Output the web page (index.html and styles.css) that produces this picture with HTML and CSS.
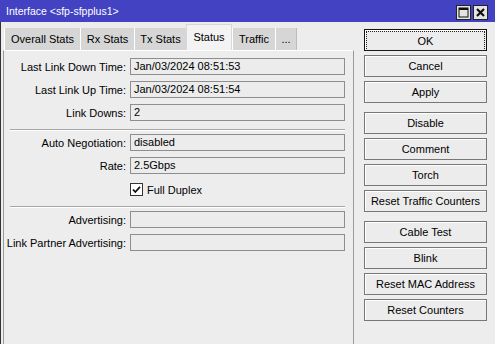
FILE: index.html
```html
<!DOCTYPE html>
<html lang="en">
<head>
  <meta charset="UTF-8">
  <title>Interface &lt;sfp-sfpplus1&gt;</title>
  <link rel="stylesheet" href="styles.css">
</head>
<body>

<div class="window">
  <div class="titlebar">
    <span class="title">Interface &lt;sfp-sfpplus1&gt;</span>
    <div class="win-buttons">
      <span class="win-btn">
        <svg width="11" height="11" viewBox="0 0 11 11"><rect x="1" y="1" width="9" height="9" fill="none" stroke="#111" stroke-width="1"/><rect x="1" y="1" width="9" height="2" fill="#111"/></svg>
      </span>
      <span class="win-btn">
        <svg width="11" height="11" viewBox="0 0 11 11"><path d="M2 2 L9 9 M9 2 L2 9" stroke="#111" stroke-width="2.2"/></svg>
      </span>
    </div>
  </div>

  <div class="body">
    <div class="left">
      <div class="tabs">
        <span class="tab t1">Overall Stats</span>
        <span class="tab t2">Rx Stats</span>
        <span class="tab t3">Tx Stats</span>
        <span class="tab active t4">Status</span>
        <span class="tab t5">Traffic</span>
        <span class="tab t6">...</span>
      </div>
      <div class="panel">
        <div class="row"><label>Last Link Down Time:</label><div class="field">Jan/03/2024 08:51:53</div></div>
        <div class="row"><label>Last Link Up Time:</label><div class="field">Jan/03/2024 08:51:54</div></div>
        <div class="row"><label>Link Downs:</label><div class="field">2</div></div>
        <div class="sep"></div>
        <div class="row"><label>Auto Negotiation:</label><div class="field">disabled</div></div>
        <div class="row"><label>Rate:</label><div class="field">2.5Gbps</div></div>
        <div class="row check-row"><label></label>
          <div class="check">
            <svg width="13" height="13" viewBox="0 0 13 13"><rect x="0.5" y="0.5" width="12" height="12" fill="#fff" stroke="#333"/><path d="M3 6.5 L5.3 9 L10 3.8" fill="none" stroke="#111" stroke-width="1.8"/></svg>
            <span>Full Duplex</span>
          </div>
        </div>
        <div class="sep"></div>
        <div class="row"><label>Advertising:</label><div class="field"></div></div>
        <div class="row"><label>Link Partner Advertising:</label><div class="field"></div></div>
      </div>
    </div>

    <div class="actions">
      <button class="ok"><span>OK</span></button>
      <button>Cancel</button>
      <button>Apply</button>
      <button class="group">Disable</button>
      <button>Comment</button>
      <button>Torch</button>
      <button>Reset Traffic Counters</button>
      <button class="group">Cable Test</button>
      <button>Blink</button>
      <button>Reset MAC Address</button>
      <button>Reset Counters</button>
    </div>
  </div>
</div>

</body>
</html>
```

FILE: styles.css
```css
body { margin: 0; font-family: "Liberation Sans", Arial, sans-serif; font-size: 11px; color: #000; }
.window { width: 495px; height: 344px; background: #ededed; display: flex; flex-direction: column; overflow: hidden; }

.titlebar { height: 22px; background: #4242c3; color: #fff; display: flex; align-items: center; justify-content: space-between; padding: 0 7px 0 6px; }
.title { font-size: 10.5px; }
.win-buttons { display: flex; gap: 2px; margin-top: 2px; }
.win-btn { width: 13px; height: 13px; background: #e4e4e4; border: 1px solid #222; display: flex; align-items: center; justify-content: center; }

.body { flex: 1; display: flex; border-left: 1px solid #333; }
.left { width: 351px; display: flex; flex-direction: column; padding-left: 2px; }

.tabs { display: flex; height: 28px; align-items: flex-end; padding-left: 1px; }
.tab { height: 22px; line-height: 22px; background: #d6d6d6; border-left: 1px solid #fff; text-align: center; box-sizing: border-box; }
.t1 { width: 76px; }
.t2 { width: 54px; }
.t3 { width: 52px; }
.t4 { width: 46px; }
.t5 { width: 43px; }
.t6 { width: 22px; border-right: 1px solid #bcbcbc; }
.tab.active { height: 26px; line-height: 24px; background: #f3f3f3; border: 1px solid #d8d8d8; border-bottom: none; }

.panel { flex: 1; display: flex; flex-direction: column; border: 1px solid #9a9a9a; border-bottom: none; border-top-color: #fff; padding: 7px 8px 0 0; }

.row { display: grid; grid-template-columns: 122px 1fr; gap: 4px; height: 17px; margin-bottom: 6px; align-items: center; }
.row label { text-align: right; white-space: nowrap; }
.field { height: 17px; box-sizing: border-box; border: 1px solid #8e8e8e; background: #ececec; padding: 0 3px; line-height: 15px; }
.check-row { margin-top: 1px; }

.sep { height: 0; border-top: 1px solid #a6a6a6; border-bottom: 1px solid #fff; margin: 2px 0 3px 6px; }

.check { display: flex; align-items: center; gap: 4px; }
.check svg { display: block; }

.actions { display: flex; flex-direction: column; gap: 4px; padding: 7px 0 0 10px; }
.actions button { width: 123px; height: 22px; background: #ececec; border: 1px solid #777; box-shadow: inset 1px 1px 0 #fff; font-family: inherit; font-size: 11px; color: #000; padding: 0; }
.actions .group { margin-top: 5px; }
.actions .ok { border-color: #111; padding: 1px; }
.actions .ok span { display: block; height: 18px; line-height: 18px; border: 1px dotted #222; }
```
